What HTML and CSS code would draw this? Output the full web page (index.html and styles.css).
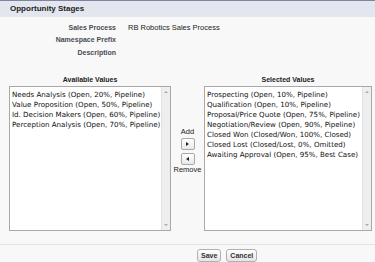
FILE: index.html
```html
<!doctype html>
<html>
<head>
<meta charset="utf-8">
<link rel="stylesheet" href="styles.css">
</head>
<body>
<div class="page">
	<div class="head">Opportunity Stages</div>

	<div class="info">
		<div class="row"><span class="lbl">Sales Process</span><span class="val">RB Robotics Sales Process</span></div>
		<div class="row"><span class="lbl">Namespace Prefix</span><span class="val"></span></div>
		<div class="row"><span class="lbl">Description</span><span class="val"></span></div>
	</div>

	<div class="picker">
		<div class="col">
			<div class="title">Available Values</div>
			<div class="box">
				<div class="items">
					<p>Needs Analysis (Open, 20%, Pipeline)</p>
					<p>Value Proposition (Open, 50%, Pipeline)</p>
					<p>Id. Decision Makers (Open, 60%, Pipeline)</p>
					<p>Perception Analysis (Open, 70%, Pipeline)</p>
				</div>
				<div class="bar"><span class="up"></span><span class="down"></span></div>
			</div>
		</div>

		<div class="mid">
			<span class="add">Add</span>
			<button class="arr"><span class="tri-r"></span></button>
			<button class="arr arr2"><span class="tri-l"></span></button>
			<span class="rem">Remove</span>
		</div>

		<div class="col col2">
			<div class="title">Selected Values</div>
			<div class="box">
				<div class="items">
					<p>Prospecting (Open, 10%, Pipeline)</p>
					<p>Qualification (Open, 10%, Pipeline)</p>
					<p>Proposal/Price Quote (Open, 75%, Pipeline)</p>
					<p>Negotiation/Review (Open, 90%, Pipeline)</p>
					<p>Closed Won (Closed/Won, 100%, Closed)</p>
					<p>Closed Lost (Closed/Lost, 0%, Omitted)</p>
					<p>Awaiting Approval (Open, 95%, Best Case)</p>
				</div>
				<div class="bar"><span class="up"></span><span class="down"></span></div>
			</div>
		</div>
	</div>

	<div class="foot">
		<button class="btn">Save</button>
		<button class="btn">Cancel</button>
	</div>
</div>
</body>
</html>
```
FILE: styles.css
```css
*{margin:0; padding:0; box-sizing:border-box;}
body{background:#f8f8f8; font-family:"Liberation Sans", Arial, sans-serif; color:#222;}

.page{width:375px; height:262px; overflow:hidden;}

.head{
	height:17px; border-top:1px solid #7c869d;
	background:#e3e6ee; padding-left:10px;
	font-size:8px; font-weight:bold; line-height:15px; color:#222;
}

.info{padding-top:4px;}
.row{display:flex; height:12.5px; align-items:center; font-size:7px;}
.lbl{width:116px; text-align:right; font-weight:bold; color:#4a4a55;}
.val{padding-left:12px; font-size:7.5px; color:#222;}

.picker{display:flex; padding:17px 0 0 9px;}
.col{width:162px;}
.col2{width:168px;}
.title{text-align:center; font-size:7px; font-weight:bold; height:10px; line-height:8px;}
.box{
	display:flex; height:145px; background:#fff;
	border:1px solid #a9a9a9;
}
.items{flex:1; padding:3px 0 0 2px; font-family:"DejaVu Sans", Verdana, sans-serif; font-size:7.1px; color:#111;}
.items p{line-height:10px; white-space:nowrap;}
.bar{
	width:9px; background:#eeeeee; border-left:1px solid #e2e2e2;
	display:flex; flex-direction:column; justify-content:space-between; align-items:center;
	padding:4px 0;
}
.up{width:0; height:0; border-left:2px solid transparent; border-right:2px solid transparent; border-bottom:2px solid #aaa;}
.down{width:0; height:0; border-left:2px solid transparent; border-right:2px solid transparent; border-top:2px solid #aaa;}

.mid{
	width:33px; display:flex; flex-direction:column; align-items:center;
	padding-top:52px; font-size:7.5px; color:#222;
}
.mid span{line-height:8px;}
.arr{
	width:14px; height:12px; margin-top:2px; background:linear-gradient(#fff,#e8e8e8);
	border:1px solid #a8a8a8; border-radius:2px;
	display:flex; align-items:center; justify-content:center;
}
.arr2{margin-top:3px;}
.rem{margin-top:1px;}
.tri-r{width:0; height:0; border-top:2.5px solid transparent; border-bottom:2.5px solid transparent; border-left:3px solid #222;}
.tri-l{width:0; height:0; border-top:2.5px solid transparent; border-bottom:2.5px solid transparent; border-right:3px solid #222;}

.foot{
	margin-top:13px; border-top:1px solid #e3e3e3;
	display:flex; gap:5px; padding:4px 0 0 197px;
}
.btn{
	height:13px; padding:0 3px; background:linear-gradient(#fff,#e5e5e5);
	border:1px solid #b0b0b0; border-radius:3px;
	font-family:"Liberation Sans", Arial, sans-serif; font-size:7px; font-weight:bold; color:#333;
}
```
